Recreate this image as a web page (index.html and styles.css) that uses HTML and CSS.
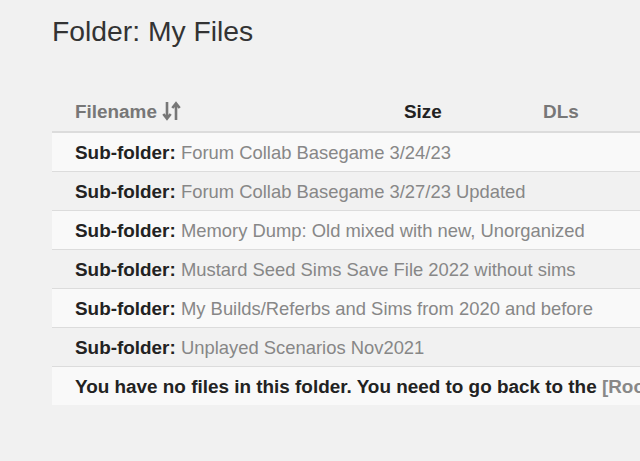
FILE: index.html
```html
<!DOCTYPE html>
<html>
<head>
<meta charset="utf-8">
<link rel="stylesheet" href="styles.css">
</head>
<body>
<div class="page">
  <h1 class="title">Folder: My Files</h1>
  <div class="table">
    <div class="head">
      <div class="col col-name">Filename
        <svg class="sort" width="19" height="20" viewBox="0 0 19 20"><path d="M5 1v16M1.3 13L5 17.6 8.7 13" fill="none" stroke="#777" stroke-width="2.6"/><path d="M14 19V3M10.3 7L14 2.4 17.7 7" fill="none" stroke="#777" stroke-width="2.6"/></svg>
      </div>
      <div class="col col-size">Size</div>
      <div class="col col-dls">DLs</div>
    </div>
    <div class="row odd"><b>Sub-folder:</b> <span class="muted">Forum Collab Basegame 3/24/23</span></div>
    <div class="row even"><b>Sub-folder:</b> <span class="muted">Forum Collab Basegame 3/27/23 Updated</span></div>
    <div class="row odd"><b>Sub-folder:</b> <span class="muted">Memory Dump: Old mixed with new, Unorganized</span></div>
    <div class="row even"><b>Sub-folder:</b> <span class="muted">Mustard Seed Sims Save File 2022 without sims</span></div>
    <div class="row odd"><b>Sub-folder:</b> <span class="muted">My Builds/Referbs and Sims from 2020 and before</span></div>
    <div class="row even"><b>Sub-folder:</b> <span class="muted">Unplayed Scenarios Nov2021</span></div>
    <div class="row odd last"><b>You have no files in this folder. You need to go back to the <span class="link">[Root]</span> folder.</b></div>
  </div>
</div>
</body>
</html>
```
FILE: styles.css
```css
html, body {
  margin: 0;
  padding: 0;
  background: #f1f1f1;
  overflow: hidden;
}
body {
  font-family: "Liberation Sans", Arial, Helvetica, sans-serif;
  color: #222;
}
.page {
  padding: 15px 0 0 52px;
}
.title {
  margin: 0;
  font-size: 28.3px;
  line-height: 32px;
  font-weight: normal;
  color: #333;
}
.table {
  width: 760px;
  margin-top: 54px;
}
.head {
  display: flex;
  font-size: 18.9px;
  line-height: 22px;
  font-weight: bold;
  padding-bottom: 8px;
  border-bottom: 2px solid #dcdcdc;
}
.col {
  padding: 0 23px;
  white-space: nowrap;
}
.col-name {
  width: 283px;
  color: #777;
  display: flex;
  align-items: center;
  gap: 5px;
}
.sort {
  display: block;
  margin-top: -2px;
}
.col-size {
  width: 93px;
  color: #222;
}
.col-dls {
  color: #777;
}
.row {
  font-size: 18.9px;
  line-height: 22px;
  padding: 9px 23px 7px;
  border-bottom: 1px solid #dcdcdc;
  white-space: nowrap;
}
.row.odd { background: #f9f9f9; }
.row.even { background: #f1f1f1; }
.row.last { border-bottom: none; }
.row b { color: #222; }
.muted { color: #878787; font-size: 18.4px; }
.link { color: #888; }
```
